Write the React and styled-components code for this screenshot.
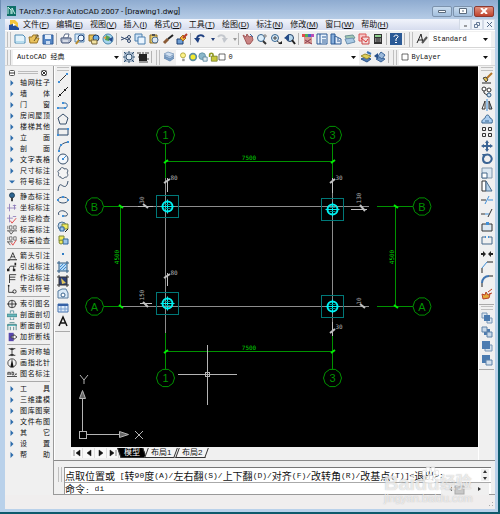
import React from "react";
import styled, { createGlobalStyle, css } from "styled-components";

const GlobalStyle = createGlobalStyle`
  * {
    box-sizing: border-box;
  }
  body {
    margin: 0;
    background: #0e5a6c;
    color: #111;
    font-family: "Liberation Sans", "Noto Sans CJK SC", sans-serif;
  }
  button, select, input {
    font: inherit;
    color: inherit;
    margin: 0;
    padding: 0;
    border: 0;
    background: none;
  }
`;

const NAVY = "#1d3f73";
const BLUE = "#3f8fd8";

const line = (d, stroke = NAVY, width = 1) => (
  <path d={d} fill="none" stroke={stroke} strokeWidth={width} />
);

// every icon is drawn on a 12 x 12 grid
const icons = {
  newFile: (
    <>
      <path d="M1 2h8l2 2v6H1z" fill="#e4f3fb" stroke="#4d8bb5" />
      <path d="M2 8h8v2H2z" fill="#b5dcee" />
    </>
  ),
  open: (
    <>
      <path d="M1 4h3l1-2h3v3h3L9 10H2z" fill="#e9c25c" stroke="#9a7524" />
      {line("M6 8l4-6M8 2h2v2", "#6a5420")}
    </>
  ),
  save: (
    <>
      <path d="M1 2h10v9H1z" fill="#5586c4" stroke="#2d5a99" />
      <path d="M3 2h6v4H3z" fill="#e5effa" />
      <path d="M4 8h4v3H4z" fill="#c9dcf2" />
    </>
  ),
  print: (
    <>
      <path d="M3 5l2-4h4L8 5z" fill="#fff" stroke="#5b6b88" />
      <path d="M1 5h10v3L9 10H2L1 8z" fill="#aeb8cc" stroke="#4b5b7c" />
      {line("M3 8h5", "#fff")}
    </>
  ),
  preview: (
    <>
      <path d="M1 1h9v8H1z" fill="#d6eafa" stroke="#5b89b5" />
      <circle cx="7" cy="5" r="3" fill="#eef8ff" stroke={NAVY} />
      {line("M5 7l-3 4", "#b98b2d", 2)}
    </>
  ),
  publish: (
    <>
      <path d="M1 2h7v6H1z" fill="#e8c45a" stroke="#8d6a1a" />
      <circle cx="8" cy="5" r="3" fill="#6fb0e6" stroke={NAVY} />
      <path d="M3 7h6v4H4z" fill="#f1e2a0" stroke="#77643a" />
    </>
  ),
  dwf: (
    <>
      <circle cx="6" cy="6" r="5" fill="#a7d6ee" stroke="#4a86ad" />
      <path d="M4 2l4 2-1 4-4-1z" fill="#57a353" />
      <path d="M6 6l5-2-1 5z" fill="#244b8d" />
      <path d="M1 5l3-2v3z" fill="#e59a3d" />
    </>
  ),
  cut: (
    <>
      {line("M1 4l7 3M1 7l7-3", "#30486e")}
      <circle cx="9" cy="4" r="1.5" fill="none" stroke="#30486e" />
      <circle cx="9" cy="8" r="1.5" fill="none" stroke="#30486e" />
    </>
  ),
  copy: (
    <>
      <path d="M1 1h7v7H1z" fill="#cfe4f7" stroke="#4b7fae" />
      <path d="M4 4h7v7H4z" fill="#eaf5ff" stroke="#4b7fae" />
    </>
  ),
  paste: (
    <>
      <path d="M2 2h7v8H2z" fill="#e6c968" stroke="#8a6a25" />
      <circle cx="7" cy="7" r="3" fill="#d9e7f4" stroke="#4f6d90" />
      {line("M4 2h3", "#4f4f4f", 2)}
    </>
  ),
  match: (
    <>
      {line("M2 10l4-4", "#8b5b36", 3)}
      {line("M6 6l5-4", "#222", 2)}
    </>
  ),
  blockEdit: (
    <>
      <path d="M1 6h6v5H1z" fill="#6f9fd4" stroke={NAVY} />
      <path d="M4 5l3-3 3 3-3 3z" fill="#f0b43c" stroke="#a66a17" />
      {line("M7 5l4-4", "#b63a2a", 2)}
    </>
  ),
  undo: (
    <>
      {line("M3 6c0-4 5-5 7-2", "#1e3f80", 2)}
      <path d="M0 5h6l-2 5z" fill="#1e3f80" />
    </>
  ),
  redo: (
    <>
      {line("M9 6c0-4-5-5-7-2", "#c3c7cd", 2)}
      <path d="M12 5H6l2 5z" fill="#c3c7cd" />
    </>
  ),
  dot: <path d="M4 5h4l-2 3z" fill="#243f78" />,
  dotOff: <path d="M4 5h4l-2 3z" fill="#999" />,
  pan: (
    <>
      <path d="M1 2l3 2 1-3 2 3 3-1 1 4-3 4H5z" fill="#c98484" stroke="#a15757" />
      {line("M8 1l3 3", "#3b6ca8")}
    </>
  ),
  zoomRt: (
    <>
      <circle cx="5" cy="5" r="3.5" fill="#dceefa" stroke="#356490" />
      {line("M7 8l3 3", "#333", 2)}
      {line("M9 1v4M7 3h4", "#888")}
    </>
  ),
  zoomWin: (
    <>
      <circle cx="5" cy="5" r="3.5" fill="#dceefa" stroke="#356490" />
      {line("M3 5h4M5 3v4M7 8l4 3", "#444", 1)}
      <path d="M8 11h4V8z" fill="#222" />
    </>
  ),
  zoomPrev: (
    <>
      <circle cx="6" cy="5" r="3.5" fill="#b9d9ee" stroke="#223f66" />
      <path d="M0 5l5-4v7z" fill="#244b87" />
      {line("M8 7l3 4", "#222", 2)}
    </>
  ),
  properties: (
    <>
      <path d="M0 1h3v3H0z" fill="#e24b4b" />
      <path d="M3 1h3v3H3z" fill="#51b253" />
      <path d="M6 1h3v3H6z" fill="#4664c9" />
      <path d="M9 1h3v3H9z" fill="#b84cb8" />
      <path d="M2 4h8v7H2z" fill="#d59a93" />
      {line("M3 7l7 4M3 10l6-4", "#8d3e50")}
    </>
  ),
  design: (
    <>
      <path d="M1 1h10v10H1z" fill="#e9f3fc" stroke="#2c5b95" />
      {line("M4 1v10M6 4h4M6 7h4M6 9h4", "#2c5b95")}
    </>
  ),
  palettes: (
    <>
      <path d="M1 1h4v10H1z" fill="#87aedb" stroke="#2c5b95" />
      <path d="M5 3l6 3v5H5z" fill="#e7effa" stroke="#2c5b95" />
      {line("M7 6h2M7 8h3", "#2c5b95")}
    </>
  ),
  sheets: (
    <>
      <path d="M1 3l8-1 2 3-8 2z" fill="#a3c9b4" stroke="#6b9297" />
      <path d="M1 6l8-1 2 4-8 2z" fill="#a9c9e4" stroke="#6b8fae" />
    </>
  ),
  markup: (
    <>
      <path d="M1 1h7v7H1z" fill="#f7c9c9" stroke="#dc5757" />
      <path d="M4 4h7v7H4z" fill="#f2dcdc" stroke="#c94848" />
      {line("M3 5l5 4 2-3", "#d33")}
    </>
  ),
  calc: (
    <>
      <path d="M2 1h8v10H2z" fill="#333" />
      <path d="M3 2h6v2H3z" fill="#8fd08f" />
      {line("M3 6h6M3 8h6", "#d7d7d7", 1)}
      {line("M5 5v5M7 5v5", "#333")}
    </>
  ),
  help: (
    <>
      <rect x="0" y="0" width="12" height="12" fill="#2b5a96" />
      {line("M4 4c0-3 5-2 4 0L6 6v2", "#fff", 1)}
      <path d="M5 9h2v1H5z" fill="#fff" />
    </>
  ),
  textStyle: (
    <>
      {line("M1 10l4-9 2 9M2 7h5", "#222", 1)}
      {line("M6 10l5-6", "#555", 2)}
    </>
  ),
  gear: (
    <>
      <path d="M1 1h10v10H1z" fill="#a7b8cb" />
      <circle cx="6" cy="6" r="3" fill="#e4edf5" stroke="#31506f" />
      {line("M1 1l2 2M9 9l2 2M11 1L9 3M1 11l2-2M6 0v2M6 10v2M0 6h2M10 6h2", "#31506f")}
    </>
  ),
  myWorkspace: (
    <>
      <path d="M2 3h8v7H2z" fill="#222" />
      {line("M1 1v2M3 1v2M6 1v2M9 1v2M11 1v2M1 6h1M10 8h2M2 11h9", "#444")}
    </>
  ),
  layers: (
    <>
      <path d="M1 7l4-2 6 2-4 3z" fill="#7ea6cf" stroke="#6b8db3" />
      <path d="M1 5l4-2 6 2-4 3z" fill="#a8c4e2" stroke="#6b8db3" />
      <path d="M1 3l4-2 6 2-4 3z" fill="#cfdff0" stroke="#8ba6c4" />
    </>
  ),
  bulb: (
    <>
      <circle cx="6" cy="4" r="3" fill="#fdf28a" stroke="#a8a035" />
      <path d="M5 8h3v3H5z" fill="#999" />
    </>
  ),
  sun: <circle cx="6" cy="6" r="4" fill="#f4ea2d" stroke="#5f8fa0" strokeWidth="2" />,
  vpFreeze: (
    <>
      <circle cx="5" cy="5" r="4" fill="#8bb7c9" stroke="#5e8fa4" />
      <path d="M6 6h5v5H6z" fill="#dce9ee" stroke="#57839a" />
    </>
  ),
  lock: (
    <>
      {line("M2 6V3c0-2 4-2 4 0v3", "#909a22", 2)}
      <path d="M4 5h7v6H4z" fill="#c9c93a" stroke="#77802a" />
    </>
  ),
  swatch: <path d="M1.500 1.500h9v9h-9z" fill="#fff" stroke="#222" />,
  layerPrev: (
    <>
      <path d="M1 8l4-2 6 2-4 3z" fill="#4d79b3" stroke="#2b548b" />
      <path d="M1 5l4-2 6 2-4 3z" fill="#e0cf58" stroke="#978a32" />
      {line("M7 1l4 2", "#3d74b3", 2)}
    </>
  ),
  layerState: (
    <>
      <path d="M2 8l4-2 5 2-4 3z" fill="#6c93c1" stroke="#3b659a" />
      <path d="M4 5l3-4 4 3-3 4z" fill="#9bb9da" stroke="#3b659a" />
      <path d="M0 5l4-3v6z" fill="#28508a" />
    </>
  ),
  // draw toolbar
  line: (
    <>
      {line("M2 10l8-8", "#333")}
      <path d="M1 9h2v2H1zM9 1h2v2H9z" fill={BLUE} />
    </>
  ),
  xline: (
    <>
      {line("M1 11L11 1", "#222")}
      <path d="M2 8h2v2H2zM7 3h2v2H7z" fill="#222" />
    </>
  ),
  polyline: (
    <>
      {line("M1 9h7c3 0 3-5 0-5H6", "#2f659c")}
      <path d="M0 8h2v2H0zM7 8h2v2H7zM5 3h2v2H5z" fill={BLUE} />
    </>
  ),
  polygon: <path d="M6 1l5 4-2 6H3L1 5z" fill="#f0f0f0" stroke="#39506c" />,
  rect: (
    <>
      {line("M1 3h10v6H1z", "#2b4668")}
      <path d="M0 8h2v2H0zM10 2h2v2h-2z" fill={BLUE} />
    </>
  ),
  arc: (
    <>
      {line("M2 11c0-5 3-8 9-9", "#39506c")}
      <path d="M1 10h2v2H1zM3 4h2v2H3zM10 1h2v2h-2z" fill={BLUE} />
    </>
  ),
  circle: (
    <>
      <circle cx="6" cy="6" r="5" fill="#f4f8fc" stroke="#39506c" />
      {line("M6 6l3-3", BLUE)}
      <path d="M5 5h2v2H5z" fill={BLUE} />
    </>
  ),
  cloud: (
    <path
      d="M3 3c0-3 4-3 4-1 3-1 5 1 3 4 2 2 0 5-2 4-1 2-4 2-4 0-3 0-3-2-2-4-2-1-1-3 1-3z"
      fill="#f4f4f4"
      stroke="#4b5d73"
    />
  ),
  spline: line("M1 11c1-9 3-6 5-5s4 1 5-5", "#39506c"),
  ellipse: (
    <>
      <ellipse cx="6" cy="6" rx="5" ry="3" fill="none" stroke="#39506c" />
      <path d="M5 2h2v2H5zM0 5h2v2H0zM10 5h2v2h-2z" fill={BLUE} />
    </>
  ),
  ellipseArc: (
    <>
      {line("M2 8c-2-3 2-5 5-4s5 4 2 5l-3 0", "#39506c")}
      <path d="M5 8h2v2H5z" fill={BLUE} />
    </>
  ),
  insert: (
    <>
      <circle cx="5" cy="5" r="4" fill="#c6daec" stroke="#4b7196" />
      <path d="M5 3h6v5H5z" fill="#f0e95c" stroke="#7b8739" />
      <path d="M3 6h4v4H3z" fill="#9fc5e8" stroke="#2f659c" />
      {line("M8 11l3-3", "#222")}
    </>
  ),
  makeBlock: (
    <>
      <path d="M2 2h5v5H2z" fill="#f0e95c" stroke="#7b8739" />
      <path d="M6 5h5v5H6z" fill="#9fc5e8" stroke="#2f659c" />
      <circle cx="4" cy="8" r="2" fill="#f0e95c" stroke="#7b8739" />
    </>
  ),
  point: <path d="M5 5h2v2H5z" fill="#2f7cc4" />,
  hatch: (
    <>
      <path d="M2 2h8v8H2z" fill="#b9d9f2" />
      {line("M0 2h12M0 10h12M2 0v12M10 0v12", "#2f5a82")}
      {line("M3 9l6-6M3 6l3-3M6 9l3-3", BLUE)}
    </>
  ),
  gradient: (
    <>
      <path d="M2 2h8v8H2z" fill="#2d3f77" />
      <path d="M4 3l5 5-4 1z" fill="#e3c95e" />
      {line("M0 2h12M0 10h12M2 0v12M10 0v12", "#333")}
    </>
  ),
  region: (
    <>
      <path d="M1 3l4-2h4l2 4v5H1z" fill="#d9e9f7" stroke="#567b9e" />
      <circle cx="6" cy="7" r="2" fill="#fff" stroke="#39648e" />
    </>
  ),
  table: (
    <>
      <path d="M1 2h10v8H1z" fill="#dfecfa" stroke="#4472b0" />
      <path d="M1 2h10v2H1z" fill="#3561a6" />
      {line("M4 4v6M8 4v6M1 7h10", "#7ba0d1")}
    </>
  ),
  mtext: line("M2 11l4-9 4 9M4 8h4", "#111", 1.5),
  // modify toolbar
  erase: (
    <>
      {line("M5 7l6-6", "#b5772a", 2)}
      <path d="M2 6l3-1 2 3-2 2z" fill="#e5c458" stroke="#444" />
      {line("M1 11h9", "#222")}
    </>
  ),
  copyObj: (
    <>
      <circle cx="3" cy="3" r="2" fill="#fff" stroke="#333" />
      <circle cx="8" cy="4" r="2" fill="#fff" stroke="#333" />
      <circle cx="8" cy="9" r="2" fill="#cfe2f4" stroke="#2f5a82" />
      {line("M3 5v2l3 2", "#333")}
    </>
  ),
  mirror: (
    <>
      {line("M6 0v12", BLUE)}
      <path d="M1 10l3-8v8z" fill="#fff" stroke="#333" />
      <path d="M11 10L8 2v8z" fill="#9bb4cc" stroke="#333" />
    </>
  ),
  offset: (
    <>
      <path d="M1 10c-1-4 3-4 3-5 1-4 4-4 5 0 2 0 3 3 2 5z" fill="#a9cdf0" stroke="#39648e" />
      {line("M4 8h4", "#39648e")}
    </>
  ),
  array: line("M1.500 1.500h3v3h-3zM7.500 1.500h3v3h-3zM1.500 7.500h3v3h-3zM7.500 7.500h3v3h-3z", "#333"),
  move: (
    <>
      {line("M6 2v8M2 6h8", "#3b6494", 2)}
      <path d="M6 0l2 3H4zM6 12l2-3H4zM0 6l3-2v4zM12 6L9 4v4z" fill="#3b6494" />
    </>
  ),
  rotate: (
    <>
      {line("M4 2c5-2 8 3 6 6s-8 3-8-2c0-1 0-2 1-3", "#3b6494", 2)}
      <path d="M1 1h5L3 5z" fill="#3b6494" />
    </>
  ),
  scale: (
    <>
      <path d="M1 1h10v10H1z" fill="#dce8f2" stroke="#8197ac" />
      <path d="M1 6h5v5H1z" fill="#fff" stroke="#47688a" />
    </>
  ),
  stretch: (
    <>
      <path d="M1 1h4v10H1z" fill="#fff" stroke="#333" />
      <path d="M5 1l6 10H5z" fill="#b8d3ea" stroke="#4c6f90" />
    </>
  ),
  trim: (
    <>
      {line("M0 6h5", "#333")}
      {line("M7 6h5", BLUE)}
      {line("M4 10l4-8", BLUE)}
    </>
  ),
  extend: (
    <>
      {line("M0 7h4", "#333")}
      {line("M4 7h4", BLUE)}
      {line("M7 10l4-8", "#333")}
    </>
  ),
  breakPt: (
    <>
      <path d="M1 3h10v7H1z" fill="#dce8f2" stroke="#333" />
      <path d="M5 1h3v3H5z" fill={BLUE} />
    </>
  ),
  breakAt: (
    <>
      {line("M4 3H1v7h10V3H8", "#47688a")}
      <path d="M4 2h1v2H4zM7 2h1v2H7z" fill={BLUE} />
    </>
  ),
  join: <path d="M0 5h2V3l3 3-3 3V7H0zM12 5h-2V3L7 6l3 3V7h2z" fill="#222" />,
  chamfer: (
    <>
      {line("M1 12V7M6 1h6", "#222")}
      {line("M1 7l5-6", BLUE)}
    </>
  ),
  fillet: (
    <>
      {line("M1 12V8M8 1h4", "#222")}
      {line("M1 8c0-4 3-7 7-7", "#3f74b0", 2)}
    </>
  ),
  explode: (
    <>
      <path d="M2 11L1 6l3 1 1-3 2 3 2-1-1 4z" fill="#e5a93a" stroke="#b74228" />
      {line("M7 4l4-3M8 6l3-1", "#b74228")}
    </>
  ),
  front: (
    <>
      <path d="M1 1h5v5H1z" fill="#dbe6f1" stroke="#7794b4" />
      <path d="M6 6h5v5H6z" fill="#dbe6f1" stroke="#7794b4" />
      <path d="M3 3h6v6H3z" fill="#4b7bb0" />
    </>
  ),
  back: (
    <>
      <path d="M3 3h6v6H3z" fill="#4b7bb0" />
      <path d="M1 1h5v5H1z" fill="#c8d8e8" stroke="#5f82a8" />
      <path d="M6 6h5v5H6z" fill="#c8d8e8" stroke="#5f82a8" />
    </>
  ),
  above: (
    <>
      <path d="M4 5h7v6H4z" fill="#d5e1ed" stroke="#7794b4" />
      <path d="M1 1h8v8H1z" fill="#4b7bb0" />
    </>
  ),
  under: (
    <>
      <path d="M1 1h8v8H1z" fill="#4b7bb0" />
      <path d="M5 6h6v5H5z" fill="#d5e1ed" stroke="#5f82a8" />
    </>
  ),
  // palette
  right: <path d="M3 0l6 6-6 6z" fill="#2c6cab" />,
  down: <path d="M0 3h12L6 9z" fill="#2c6cab" />,
  pin: (
    <>
      <circle cx="6" cy="4" r="3" fill="#2d6591" stroke="#17364f" />
      <path d="M5 7h2v4H5z" fill="#222" />
    </>
  ),
  coord: (
    <>
      {line("M3 1v9M0 6h7", "#8b78b8")}
      {line("M7 3h4M7 6h4M9 2v6", "#8b78b8")}
    </>
  ),
  coordCheck: (
    <>
      {line("M3 1v9M0 5h7M7 3h4", "#8b78b8")}
      {line("M4 8l2 3 5-6", "#d33")}
    </>
  ),
  elev: (
    <>
      {line("M1 1v4M3 1h3v4H3zM8 1h3v4H8z", "#666")}
      {line("M0 7h12M2 7l3 4 3-4", "#444")}
    </>
  ),
  elevCheck: (
    <>
      {line("M1 1v4M3 1h3v4H3zM8 1h3v4H8z", "#666")}
      {line("M0 7h7M1 7l3 4", "#444")}
      {line("M5 8l2 3 4-6", "#d33")}
    </>
  ),
  arrowNote: (
    <>
      {line("M4 9l3-7 3 7M5 7h4", "#222", 1)}
      <path d="M0 11l3-2v3zM2 10h10v1H2z" fill="#222" />
    </>
  ),
  leader: (
    <>
      {line("M1 10l3-5h7M8 5v5", "#222")}
      <path d="M0 8h3v3H0zM7 8h3v3H7zM9 1h2v3H9z" fill="#222" />
    </>
  ),
  practice: line("M3 12V2h8M3 5h7M3 8h7", "#222", 1),
  indexSym: (
    <>
      {line("M2 2v8h6", "#222")}
      <circle cx="2" cy="2" r="1" fill="#222" />
      <circle cx="9" cy="9" r="2" fill="none" stroke="#222" />
    </>
  ),
  indexName: (
    <>
      <circle cx="6" cy="6" r="4.500" fill="none" stroke="#222" />
      {line("M0 6h12M6 2v8", "#222")}
    </>
  ),
  sectionCut: (
    <>
      <path d="M0 5h12v3H0z" fill="#63b9bd" stroke="#3b8589" />
      {line("M4 4V1h4v3M4 9v3h4V9", "#55909b")}
    </>
  ),
  planeCut: (
    <>
      <path d="M0 4h12v2H0z" fill="#63b9bd" />
      {line("M1 11V4h10v7M4 11V7M8 11V7M3 2h6", "#477f83")}
    </>
  ),
  breakLine: (
    <>
      <path d="M2 1h6v10H2z" fill="#5746ad" />
      <path d="M5 5h3V3l4 3-4 3V7H5z" fill="#fff" stroke="#333" />
    </>
  ),
  symAxis: line("M2 2h8M2 10h8M6 1v10M4 3h4M4 9h4", "#222"),
  north: (
    <>
      <circle cx="6" cy="6" r="5" fill="none" stroke="#333" />
      <path d="M6 1l2 10H4z" fill="#111" />
    </>
  ),
  picName: line("M0 9h12M1 7V4h3v3M1 6h3M6 3v4h2V4H6M10 6h2M9 8l2-2", "#333"),
};

const Glyph = styled.svg`
  display: block;
  flex: none;
  width: ${(p) => p.$size || 12}px;
  height: ${(p) => p.$size || 12}px;
`;

function Icon({ name, size }) {
  return (
    <Glyph $size={size} viewBox="0 0 12 12" aria-hidden="true">
      {icons[name]}
    </Glyph>
  );
}

const Frame = styled.div`
  display: flex;
  flex-direction: column;
  min-height: 100vh;
  border: solid #0e5a6c;
  border-width: 0 2px 2px 0;
  background: #b9d1ea;
  position: relative;
`;

const TitleBar = styled.header`
  display: flex;
  align-items: center;
  height: 19px;
  flex: none;
  padding: 3px 4px 0 6px;
  gap: 3px;
  border-left: 1px solid #6f8fb5;
  background: linear-gradient(#8eabd0, #b6cce6);
`;

const Title = styled.h1`
  flex: 1;
  margin: 0;
  font: 400 8px Roboto, "Open Sans", sans-serif;
  white-space: nowrap;
`;

const AppLogo = styled.svg`
  width: 9px;
  height: 10px;
`;

const WindowButtons = styled.div`
  display: flex;
  gap: 1px;
`;

const WindowButton = styled.button`
  display: grid;
  place-items: center;
  width: 20px;
  height: 11px;
  border: 1px solid #7d93ad;
  border-radius: 2px;
  background: linear-gradient(#c9dcef, #a3bfdd);
  ${(p) =>
    p.$close &&
    css`
      border-color: #8b3a32;
      background: linear-gradient(#e0917f, #c0432d);
    `}
`;

const Client = styled.div`
  display: flex;
  flex-direction: column;
  flex: 1;
  margin: 0 3px 3px 5px;
  background: #f0f0f0;
`;

const MenuBar = styled.nav`
  display: flex;
  align-items: center;
  height: 11px;
  padding-left: 4px;
  background: linear-gradient(#f1f4fb, #d6dcee);
`;

const Menus = styled.div`
  display: flex;
  flex: 1;
  gap: 7px;
  padding-left: 4px;
`;

const MenuItem = styled.button`
  font-size: 8px;
  line-height: 10px;
  white-space: nowrap;
`;

const ChildButton = styled.button`
  display: grid;
  place-items: center;
  width: 12px;
  height: 11px;
  border: 1px solid #d3dae6;
  background: #f0f4fa;
`;

const ToolRow = styled.div`
  display: flex;
  align-items: center;
  height: 18px;
  padding-right: 4px;
  border-top: 1px solid #fff;
  border-bottom: 1px solid #d6d6d6;
`;

const Grip = styled.span`
  flex: none;
  ${(p) =>
    p.$across
      ? css`
          width: 12px;
          height: 4px;
          border-block: 1px solid #c0c0c0;
        `
      : css`
          width: 4px;
          height: 15px;
          margin: 0 2px;
          border-inline: 1px solid #c0c0c0;
        `}
`;

const Separator = styled.span`
  flex: none;
  width: 1px;
  height: 12px;
  margin: 0 2px 0 1px;
  background: #b4b4b4;
`;

const ToolButton = styled.button`
  display: grid;
  place-items: center;
  flex: none;
  width: ${(p) => (p.$narrow ? 8 : 14)}px;
  height: 13px;
`;

const Field = styled.label`
  position: relative;
  display: flex;
  align-items: center;
  flex: ${(p) => p.$grow || "none"};
  min-width: 0;
  height: 15px;
  padding-left: 2px;
  background: #fff;
`;

const Select = styled.select`
  appearance: none;
  flex: 1;
  min-width: 0;
  height: 13px;
  padding-left: 2px;
  font: 7px "Liberation Mono", "Noto Sans CJK SC", monospace;
`;

const Caret = styled.svg`
  position: absolute;
  right: 3px;
  width: 5px;
  height: 3px;
  pointer-events: none;
`;

const Main = styled.div`
  display: flex;
  flex: 1;
`;

const Palette = styled.aside`
  width: 49px;
  flex: none;
  padding: 2px 3px 0 2px;
  border-right: 1px solid #9a9a9a;
`;

const PaletteHead = styled.div`
  display: flex;
  align-items: center;
  gap: 3px;
  height: 9px;
  padding: 0 3px 0 2px;
`;

const PaletteGrip = styled.span`
  flex: 1;
  height: 3px;
  border-block: 1px solid #bbb;
`;

const PaletteGroup = styled.div`
  padding: ${(p) => (p.$first ? "0" : "1px")} 0 2px;
  & + & {
    border-top: 1px solid #aaa;
  }
`;

const PaletteItem = styled.button`
  display: flex;
  align-items: center;
  gap: 3px;
  width: 100%;
  height: 11px;
  font-size: 7px;
  line-height: 11px;
`;

const PaletteIcon = styled.span`
  display: grid;
  place-items: center;
  width: 10px;
`;

const PaletteText = styled.span`
  flex: 1;
  text-align-last: justify;
`;

const Work = styled.div`
  display: flex;
  flex-direction: column;
  flex: 1;
  min-width: 0;
`;

const Desk = styled.div`
  display: flex;
  flex: 1;
`;

const SideTools = styled.div`
  width: 17px;
  flex: none;
  border-left: 1px solid #fff;
`;

const SideBar = styled.div`
  display: flex;
  flex-direction: column;
  align-items: center;
  justify-content: space-between;
  width: 15px;
  height: ${(p) => p.$length}px;
  padding: 1px 0 3px;
  border-bottom: 1px solid #aaa;
`;

const Drawing = styled.main`
  display: flex;
  flex-direction: column;
  flex: 1;
  min-width: 0;
`;

const Sheet = styled.svg`
  flex: 1;
  width: 100%;
  min-height: 0;
  border-top: 1px solid #555;
  background: #000;
  font-family: "DejaVu Sans Mono", monospace;
`;

const SheetTabs = styled.div`
  display: flex;
  align-items: center;
  height: 13px;
  padding: 0 0 2px;
`;

const NavButton = styled.button`
  display: grid;
  place-items: center;
  width: 12px;
  height: 10px;
  border-right: 1px solid #ddd;
  background: #f8f8f8;
`;

const SheetTab = styled.button`
  height: 10px;
  padding: 0 4px;
  margin-right: 1px;
  font-size: 8px;
  line-height: 10px;
  border: 1px solid #333;
  border-width: 0 1px 1px;
  transform: ${(p) => (p.$active ? "skewX(20deg)" : "skewX(-20deg)")};
  background: ${(p) => (p.$active ? "#000" : "#f4f4f4")};
  color: ${(p) => (p.$active ? "#fff" : "#111")};
  & > span {
    display: block;
    transform: ${(p) => (p.$active ? "skewX(-20deg)" : "skewX(20deg)")};
  }
`;

const Command = styled.section`
  display: flex;
  height: 35px;
  padding: 6px 4px 0 2px;
  border-top: 1px solid #8a8a8a;
  border-bottom: 1px solid #999;
`;

const CommandBox = styled.div`
  flex: 1;
  min-width: 0;
  border-top: 1px solid #777;
  border-left: 1px solid #999;
  background: #fff;
`;

const CommandLine = styled.div`
  display: flex;
  align-items: center;
  height: 14px;
  padding-right: 2px;
  font: 8px "Liberation Mono", "Noto Sans CJK SC", monospace;
  white-space: pre;
  & + & {
    height: 12px;
    border-top: 1px solid #aaa;
  }
`;

const Han = styled.span`
  font-size: 10px;
`;

const CommandInput = styled.input`
  flex: 1;
  min-width: 0;
  outline: 0;
`;

const ScrollGlyph = styled.svg`
  width: ${(p) => p.$w}px;
  height: 12px;
  margin-left: auto;
  background: #f0f0f0;
`;

const StatusBar = styled.footer`
  display: flex;
  justify-content: flex-end;
  align-items: flex-end;
  height: 14px;
  background: #f0eeee;
`;

const Watermark = styled.div`
  position: absolute;
  right: 22px;
  bottom: 8px;
  width: 92px;
  pointer-events: none;
  color: rgba(255, 255, 255, 0.7);
  text-shadow: 0 0 1px rgba(110, 110, 110, 0.5);
`;

const WatermarkBrand = styled.div`
  display: flex;
  align-items: center;
  font-size: 20px;
  font-weight: 700;
  line-height: 20px;
  & > svg {
    position: absolute;
    left: 37px;
    top: -7px;
    width: 18px;
    height: 18px;
  }
`;

const WatermarkSmall = styled.span`
  font-size: 16px;
`;

const WatermarkUrl = styled.div`
  font-size: 11px;
  line-height: 11px;
`;

const menus = [
  ["文件", "F"],
  ["编辑", "E"],
  ["视图", "V"],
  ["插入", "I"],
  ["格式", "O"],
  ["工具", "T"],
  ["绘图", "D"],
  ["标注", "N"],
  ["修改", "M"],
  ["窗口", "W"],
  ["帮助", "H"],
];

const standardTools = [
  "newFile", "open", "save", "|",
  "print", "preview", "publish", "dwf", "|",
  "cut", "copy", "paste", "match", "blockEdit", "|",
  "undo", "dot", "redo", "dotOff", "|",
  "pan", "zoomRt", "zoomWin", "zoomPrev", "|",
  "properties", "design", "palettes", "sheets", "markup", "calc", "|",
  "help",
];

const drawTools = [
  "line", "xline", "polyline", "polygon", "rect", "arc", "circle", "cloud",
  "spline", "ellipse", "ellipseArc", "insert", "makeBlock", "point", "hatch",
  "gradient", "region", "table", "mtext",
];

const modifyTools = [
  "erase", "copyObj", "mirror", "offset", "array", "move", "rotate", "scale",
  "stretch", "trim", "extend", "breakPt", "breakAt", "join", "chamfer",
  "fillet", "explode",
];

const orderTools = ["front", "back", "above", "under"];

const paletteGroups = [
  [
    ["right", "轴网柱子"],
    ["right", "墙 体"],
    ["right", "门 窗"],
    ["right", "房间屋顶"],
    ["right", "楼梯其他"],
    ["right", "立 面"],
    ["right", "剖 面"],
    ["right", "文字表格"],
    ["right", "尺寸标注"],
    ["down", "符号标注"],
  ],
  [
    ["pin", "静态标注"],
    ["coord", "坐标标注"],
    ["coordCheck", "坐标检查"],
    ["elev", "标高标注"],
    ["elevCheck", "标高检查"],
  ],
  [
    ["arrowNote", "箭头引注"],
    ["leader", "引出标注"],
    ["practice", "作法标注"],
    ["indexSym", "索引符号"],
  ],
  [
    ["indexName", "索引图名"],
    ["sectionCut", "剖面剖切"],
    ["planeCut", "断面剖切"],
    ["breakLine", "加折断线"],
  ],
  [
    ["symAxis", "画对称轴"],
    ["north", "画指北针"],
    ["picName", "图名标注"],
  ],
  [
    ["right", "工 具"],
    ["right", "三维建模"],
    ["right", "图库图案"],
    ["right", "文件布图"],
    ["right", "其 它"],
    ["right", "设 置"],
    ["right", "帮 助"],
  ],
];

function Tools({ names }) {
  return names.map((name, i) =>
    name === "|" ? (
      <Separator key={i} />
    ) : (
      <ToolButton key={i} aria-label={name} $narrow={name.startsWith("dot")}>
        <Icon name={name} />
      </ToolButton>
    )
  );
}

function Combo({ label, options, grow, children }) {
  return (
    <Field $grow={grow}>
      {children}
      <Select aria-label={label}>
        {options.map((o) => (
          <option key={o}>{o}</option>
        ))}
      </Select>
      <Caret viewBox="0 0 5 3">
        <path d="M0 0h5L2.500 3z" fill="#111" />
      </Caret>
    </Field>
  );
}

const GREEN = "#009200";
const GREY = "#8c8c8c";

function Bubble({ x, y, children }) {
  const points = Array.from({ length: 10 }, (_, i) => {
    const a = (i * Math.PI) / 5;
    return `${(x + 9 * Math.cos(a)).toFixed(1)},${(y + 9 * Math.sin(a)).toFixed(1)}`;
  }).join(" ");
  return (
    <g>
      <polygon points={points} fill="none" stroke={GREEN} />
      <text
        x={x}
        y={y + 4}
        fontSize="11"
        fill={GREEN}
        textAnchor="middle"
        fontFamily="Liberation Sans"
      >
        {children}
      </text>
    </g>
  );
}

function Column({ x, y }) {
  return (
    <g stroke="#00f0f0" fill="none">
      <rect x={x - 11} y={y - 11} width="22" height="22" stroke="#007878" />
      <circle cx={x} cy={y} r="5" strokeWidth="2" />
      <path d={`M${x - 7} ${y}h14M${x} ${y - 7}v14`} />
      <path d={`M${x - 3} ${y - 2}h6M${x - 3} ${y + 2}h6`} stroke="#008c8c" />
    </g>
  );
}

function DimText({ x, y, up, color = "#b0b0b0", size = 6, children }) {
  return (
    <text
      x={x}
      y={y}
      fontSize={size}
      fill={color}
      textAnchor="middle"
      transform={up ? `rotate(-90 ${x} ${y})` : undefined}
    >
      {children}
    </text>
  );
}

function Plan() {
  return (
    <Sheet viewBox="71 67 407 380" preserveAspectRatio="xMinYMin meet" role="img" aria-label="Drawing1">
      <g fill="none" stroke={GREY}>
        <path d="M121 206.500H369M121 306.500H369M165.500 178V333M332.500 178V333" />
      </g>
      <g fill="none" stroke={GREEN}>
        <path d="M165.500 144V178M165.500 333V369M332.500 144V178M332.500 333V369" />
        <path d="M104 206.500h17M104 306.500h17M377 206.500h36M377 306.500h36" />
        <path d="M165.500 161.500h167M165.500 351.500h167M120.500 206v100M395.500 206v100" />
      </g>
      <g fill="none" stroke="#00f000" strokeWidth="2">
        <path d="M164 163l4-3M331 163l4-3M164 353l4-3M331 353l4-3" />
        <path d="M119 205l4 3M119 305l4 3M394 205l4 3M394 305l4 3" />
      </g>
      <g fill="none" stroke="#c0c0c0">
        <path d="M167.500 178v14M167.500 273v13M332.500 178v15M332.500 322v14" />
        <path d="M138 206.500h15M140 303.500h12M351 209.500h16" />
        <path
          d="M164 183l6-4M164 278l6-4M330 183l5-4M330 333l5-4M143 204l5 4M143 302l5 5M360 205l5 6M360 304l5 4"
          strokeWidth="2"
        />
      </g>
      <Bubble x={165.5} y={135}>1</Bubble>
      <Bubble x={332.5} y={135}>3</Bubble>
      <Bubble x={165.5} y={378}>1</Bubble>
      <Bubble x={332.5} y={378}>3</Bubble>
      <Bubble x={94.5} y={206.5}>B</Bubble>
      <Bubble x={422} y={206.5}>B</Bubble>
      <Bubble x={94.5} y={306.5}>A</Bubble>
      <Bubble x={422} y={306.5}>A</Bubble>
      <Column x={167.5} y={206.5} />
      <Column x={332.5} y={209.5} />
      <Column x={167.5} y={303.5} />
      <Column x={332.5} y={306.5} />
      <DimText x={249} y={160} color="#00d000">7500</DimText>
      <DimText x={249} y={350} color="#00d000">7500</DimText>
      <DimText x={119} y={257} up color="#00d000">4500</DimText>
      <DimText x={394} y={257} up color="#00d000">4500</DimText>
      <DimText x={174} y={180}>80</DimText>
      <DimText x={339} y={180}>30</DimText>
      <DimText x={174} y={275}>80</DimText>
      <DimText x={339} y={329}>30</DimText>
      <DimText x={144} y={200} up>30</DimText>
      <DimText x={361} y={198} up>130</DimText>
      <DimText x={144} y={295} up>150</DimText>
      <DimText x={361} y={301} up>10</DimText>
      <g fill="none" stroke="#b4b4b4">
        <path d="M178 374.500h59M207.500 345v60" />
        <rect x="205.500" y="372.500" width="4" height="4" />
        <rect x="79.500" y="431.500" width="7" height="7" />
        <path d="M82.500 431V398M87 434.500h33" />
        <path d="M79.500 398.500l3-8 3 8zM119.500 431.500l9 3-9 3z" fill="#666" />
        <path d="M80 375l4 5 4-5M84 380v4M135 431l8 8M143 431l-8 8" />
      </g>
    </Sheet>
  );
}

const prompt =
  "点取位置或 [转90度(A)/左右翻(S)/上下翻(D)/对齐(F)/改转角(R)/改基点(T)]<退出>:";

// Chinese runs are set larger than the latin ones
function Mixed({ text }) {
  return text
    .split(/([\u4e00-\u9fff]+)/)
    .map((part, i) => (i % 2 ? <Han key={i}>{part}</Han> : part));
}

const navArrows = ["M3 2v6M9 2L5 5l4 3z", "M8 2L4 5l4 3z", "M4 2l4 3-4 3z", "M9 2v6M3 2l4 3-4 3z"];

function App() {
  return (
    <>
      <GlobalStyle />
      <Frame>
        <TitleBar>
          <AppLogo viewBox="0 0 9 10">
            <path d="M0 0h9v10H0z" fill="#0f6f68" />
            <path d="M1 8V1l3 3v4M5 8V2l3 6" fill="none" stroke="#c5efe6" />
          </AppLogo>
          <Title>TArch7.5 For AutoCAD 2007 - [Drawing1.dwg]</Title>
          <WindowButtons>
            <WindowButton aria-label="minimize">
              <svg width="8" height="5">
                <path d="M0.500 1.500h7v2h-7z" fill="#fff" stroke="#5a6a7c" />
              </svg>
            </WindowButton>
            <WindowButton aria-label="maximize">
              <svg width="8" height="6">
                <path d="M0.500 0.500h7v5h-7z" fill="#fff" stroke="#5a6a7c" />
                <path d="M3 2.500h2v1H3z" fill="#5a6a7c" />
              </svg>
            </WindowButton>
            <WindowButton aria-label="close" $close>
              <svg width="8" height="6">
                <path d="M1 0l6 6M7 0L1 6" stroke="#fff" strokeWidth="2" />
              </svg>
            </WindowButton>
          </WindowButtons>
        </TitleBar>
        <Client>
          <MenuBar>
            <svg width="10" height="10" viewBox="0 0 10 10">
              <path d="M1 0h5l3 3v4H1z" fill="#f3c53c" />
              <path d="M0 5l4-1 6 4v2H0z" fill="#234f9c" />
              <path d="M4 3l3 2-3 1z" fill="#fff" />
            </svg>
            <Menus>
              {menus.map(([text, key]) => (
                <MenuItem key={key}>
                  {text}(<u>{key}</u>)
                </MenuItem>
              ))}
            </Menus>
            <ChildButton aria-label="minimize drawing">
              <svg width="5" height="5">
                <path d="M1 4h3" stroke="#444" />
              </svg>
            </ChildButton>
            <ChildButton aria-label="restore drawing">
              <svg width="6" height="6">
                <path d="M2.500 2V0.500h3v3H4M0.500 2.500h3v3h-3z" fill="none" stroke="#667b98" />
              </svg>
            </ChildButton>
            <ChildButton aria-label="close drawing">
              <svg width="5" height="5">
                <path d="M0 0l5 5M5 0L0 5" stroke="#556a88" />
              </svg>
            </ChildButton>
          </MenuBar>
          <ToolRow>
            <Grip />
            <Tools names={standardTools} />
            <Separator />
            <Grip />
            <Tools names={["textStyle"]} />
            <Combo label="text style" options={["Standard"]} grow="1" />
          </ToolRow>
          <ToolRow>
            <Grip />
            <Combo label="workspace" options={["AutoCAD 经典"]} grow="108" />
            <Tools names={["gear", "myWorkspace"]} />
            <Separator />
            <Grip />
            <Tools names={["layers"]} />
            <Combo label="layer" options={["0"]} grow="182">
              <Icon name="bulb" size={10} />
              <Icon name="sun" size={10} />
              <Icon name="vpFreeze" size={10} />
              <Icon name="lock" size={10} />
              <Icon name="swatch" size={8} />
            </Combo>
            <Tools names={["layerPrev", "layerState"]} />
            <Separator />
            <Grip />
            <Combo label="color" options={["ByLayer"]} grow="90">
              <Icon name="swatch" size={8} />
            </Combo>
          </ToolRow>
          <Main>
            <Palette>
              <PaletteHead>
                <svg width="6" height="6">
                  <rect x="0.500" y="0.500" width="5" height="5" rx="1" fill="#fff" stroke="#555" />
                  <path d="M1 3h4" stroke="#333" />
                </svg>
                <PaletteGrip />
                <svg width="6" height="6">
                  <rect x="0.500" y="0.500" width="5" height="5" rx="1" fill="#fff" stroke="#555" />
                  <path d="M1 1l4 4M5 1L1 5" stroke="#333" />
                </svg>
              </PaletteHead>
              {paletteGroups.map((group, i) => (
                <PaletteGroup key={i} $first={i === 0}>
                  {group.map(([icon, text]) => (
                    <PaletteItem key={text}>
                      <PaletteIcon>
                        <Icon name={icon} size={icon === "right" || icon === "down" ? 6 : 10} />
                      </PaletteIcon>
                      <PaletteText>{text}</PaletteText>
                    </PaletteItem>
                  ))}
                </PaletteGroup>
              ))}
            </Palette>
            <Work>
              <Desk>
                <SideTools>
                  <SideBar $length={266}>
                    <Grip $across />
                    <Tools names={drawTools} />
                  </SideBar>
                </SideTools>
                <Drawing>
                  <Plan />
                  <SheetTabs>
                    {navArrows.map((d) => (
                      <NavButton key={d} aria-label="scroll tabs">
                        <svg width="11" height="10">
                          <path d={d} fill="#111" stroke="#111" strokeWidth="0.500" />
                        </svg>
                      </NavButton>
                    ))}
                    <SheetTab $active>
                      <span>模型</span>
                    </SheetTab>
                    <SheetTab>
                      <span>布局1</span>
                    </SheetTab>
                    <SheetTab>
                      <span>布局2</span>
                    </SheetTab>
                  </SheetTabs>
                </Drawing>
                <SideTools>
                  <SideBar $length={239}>
                    <Grip $across />
                    <Tools names={modifyTools} />
                  </SideBar>
                  <SideBar $length={65}>
                    <Grip $across />
                    <Tools names={orderTools} />
                  </SideBar>
                </SideTools>
              </Desk>
              <Command>
                <Grip />
                <CommandBox>
                  <CommandLine>
                    <Mixed text={prompt} />
                    <ScrollGlyph $w={8} viewBox="0 0 8 12">
                      <path d="M2 4l2-3 2 3zM2 8l2 3 2-3z" fill="#333" />
                    </ScrollGlyph>
                  </CommandLine>
                  <CommandLine>
                    <label htmlFor="cmd">
                      <Mixed text="命令: " />
                    </label>
                    <CommandInput id="cmd" defaultValue="di" />
                    <ScrollGlyph $w={48} viewBox="0 0 48 12">
                      <path d="M11 4L8 6l3 2zM37 4l3 2-3 2z" fill="#333" />
                      <rect x="14" y="3" width="9" height="8" fill="#c8c8c8" stroke="#aaa" />
                    </ScrollGlyph>
                  </CommandLine>
                </CommandBox>
              </Command>
            </Work>
          </Main>
          <StatusBar>
            <svg width="8" height="8">
              <path d="M5 1h1v1H5zM5 4h1v1H5zM2 4h1v1H2z" fill="#aaa" />
            </svg>
          </StatusBar>
        </Client>
        <Watermark>
          <WatermarkBrand>
            <svg viewBox="0 0 18 18" fill="rgba(255,255,255,0.8)" stroke="#ccc" strokeWidth="0.500">
              <ellipse cx="3" cy="7" rx="2" ry="3" />
              <ellipse cx="7" cy="3" rx="2" ry="3" />
              <ellipse cx="12" cy="3" rx="2" ry="3" />
              <ellipse cx="16" cy="7" rx="2" ry="3" />
              <path d="M9 8c3 0 3 3 5 5s0 4-2 4H6c-3 0-3-3-1-4s1-5 4-5z" />
            </svg>
            Baidu<WatermarkSmall>经验</WatermarkSmall>
          </WatermarkBrand>
          <WatermarkUrl>jingyan.baidu.com</WatermarkUrl>
        </Watermark>
      </Frame>
    </>
  );
}

export default App;
